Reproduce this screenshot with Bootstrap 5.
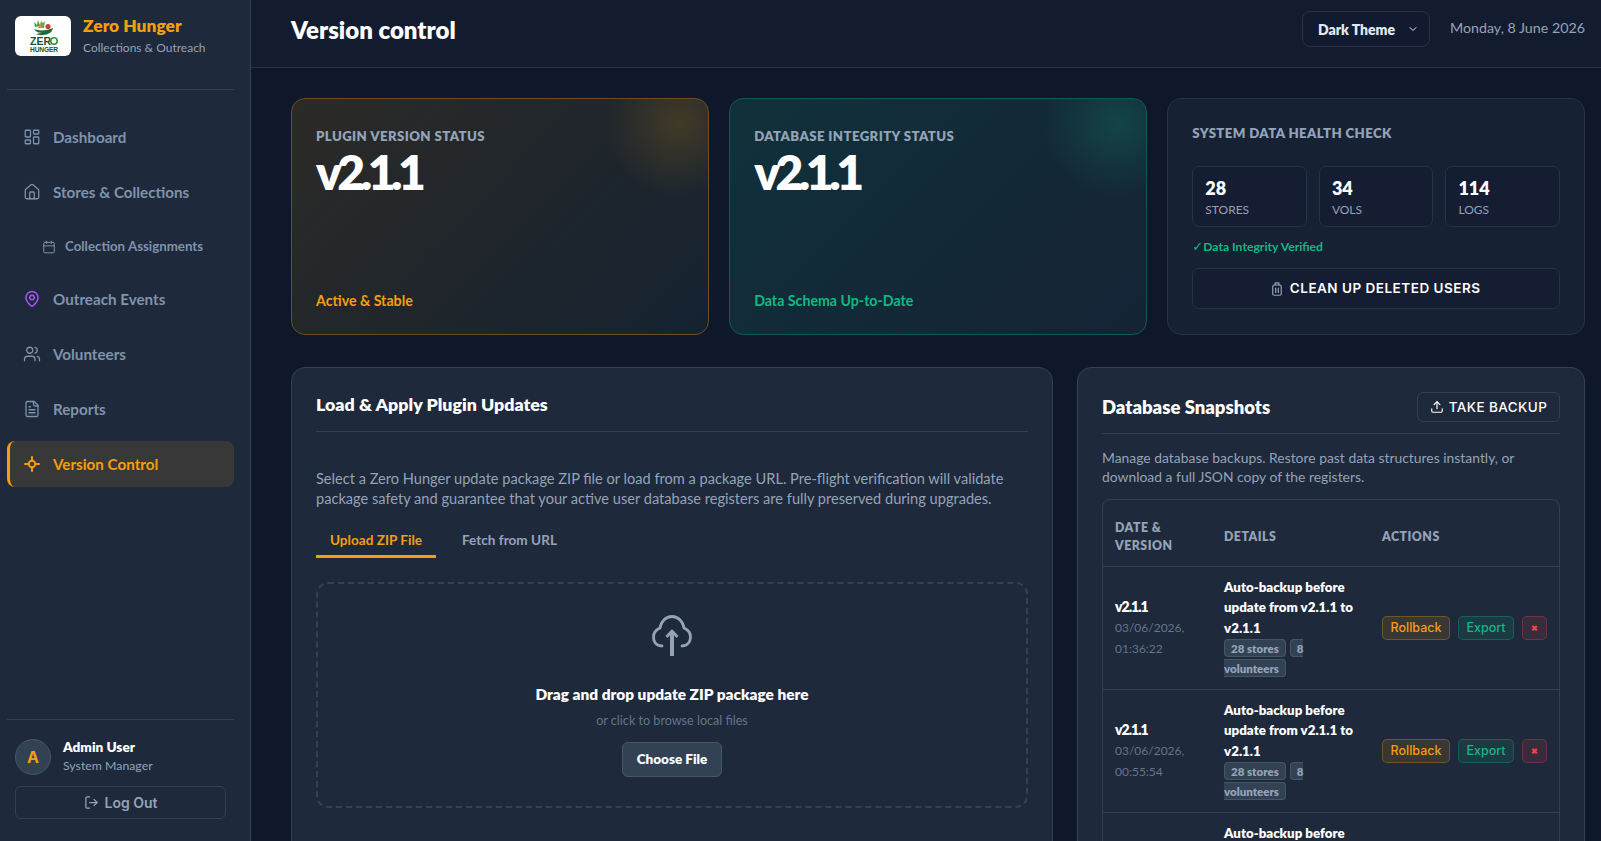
<!DOCTYPE html>
<html lang="en">
<head>
    <meta charset="UTF-8">
    <meta name="viewport" content="width=device-width, initial-scale=1.0">
    <title>Version control</title>
    <link href="https://cdn.jsdelivr.net/npm/bootstrap@5.3.0/dist/css/bootstrap.min.css" rel="stylesheet">
    <style>
        html, body { height: 100%; }
        body { background: #0f172a; color: #fff; font-family: Lato, "Noto Sans", sans-serif; overflow: hidden; }
        svg.ico { fill: none; stroke: currentColor; stroke-width: 2; stroke-linecap: round; stroke-linejoin: round; flex-shrink: 0; }
        svg.ico-thin { stroke-width: 1.7; }
        svg.ico-fine { stroke-width: 1.2; color: #94a3b8; }
        svg.ico-cloud { stroke-width: 2.8; }
        svg.ico-pin { color: #a855f7; }
        .app-shell { height: 841px; }

        /* sidebar */
        .side-panel { width: 251px; background: #1e293b; border-right: 1px solid #334155; flex-shrink: 0; padding: 16px 16px 22px 7px; }
        .brand-row { height: 74px; padding-left: 8px; border-bottom: 1px solid #334155; gap: 12px; align-items: flex-start; }
        .logo-box { width: 56px; height: 40px; background: #fff; border-radius: 6px; }
        .brand-name { color: #f59e0b; font-size: 17.4px; font-weight: 800; line-height: 20px; }
        .brand-sub { color: #94a3b8; font-size: 12px; line-height: 18px; margin-top: 3px; }
        .side-nav { margin-top: 24px; }
        .side-link { height: 46px; margin-bottom: 9px; padding-left: 17px; gap: 12px; color: #7f93ad; font-size: 15.2px; font-weight: 700; border-left: 3px solid transparent; border-radius: 8px; text-decoration: none; }
        .side-link svg { margin-left: -4px; }
        .side-sub { height: 46px; margin-bottom: 6px; padding-left: 35px; gap: 9px; color: #7f93ad; font-size: 13.3px; font-weight: 700; text-decoration: none; }
        .side-link.is-active { background: #383838; color: #f59e0b; border-left-color: #f59e0b; }
        .side-foot { border-top: 1px solid #334155; padding: 18px 0 0 8px; }
        .user-avatar { width: 36px; height: 36px; border-radius: 50%; background: #334155; border: 1px solid #475569; color: #f59e0b; font-family: Inter, sans-serif; font-size: 16px; font-weight: 700; }
        .user-meta { margin-left: 4px; }
        .user-name { font-size: 13.6px; font-weight: 800; line-height: 18px; }
        .user-role { color: #94a3b8; font-size: 12.3px; line-height: 19px; }
        .logout-btn { width: 211px; height: 33px; margin-top: 11px; background: transparent; border: 1px solid #334155; border-radius: 6px; color: #94a3b8; font-family: Inter, sans-serif; font-size: 14px; font-weight: 600; gap: 6px; }

        /* header */
        .top-bar { height: 68px; background: #131c2f; border-bottom: 1px solid #263247; padding: 0 16px 9px 40px; flex-shrink: 0; }
        .page-title { font-size: 24px; font-weight: 800; margin: 3px 0 0; }
        .theme-pick { width: 128px; height: 36px; background: #111a2e; border: 1px solid #263247; border-radius: 8px; font-size: 14px; font-weight: 800; color: #e2e8f0; gap: 12px; padding-left: 15px; }
        .today-label { color: #94a3b8; font-size: 14.25px; margin: 0 0 3px 20px; }

        /* main */
        .work-area { padding: 30px 16px 0 40px; }
        .stat-grid { display: grid; grid-template-columns: repeat(3, 1fr); gap: 20.5px; height: 237px; }
        .status-tile { position: relative; overflow: hidden; border-radius: 14px; padding: 29px 24px 24px; border: 1px solid #334155; }
        .tile-amber { border-color: #6b4f1c; background: radial-gradient(circle 75px at 388px 25px, rgba(245,158,11,.17), transparent), linear-gradient(135deg, #2c2a27 0%, #142230 100%); }
        .tile-green { border-color: #0d5c4f; background: radial-gradient(circle 75px at 388px 25px, rgba(16,185,129,.2), transparent), linear-gradient(135deg, #10313a 0%, #152235 100%); }
        .tile-plain { background: #162133; border-color: #263247; padding: 26px 24px; }
        .tile-label { color: #94a3b8; font-size: 13.2px; font-weight: 800; letter-spacing: .4px; line-height: 16px; text-transform: uppercase; }
        .tile-version { font-size: 48px; font-weight: 800; line-height: 50px; margin-top: 3px; letter-spacing: -4.5px; }
        .tile-foot { position: absolute; left: 24px; bottom: 23px; font-size: 14.2px; font-weight: 700; }
        .tone-amber { color: #f59e0b; }
        .tone-green { color: #10b981; }
        .count-row { display: grid; grid-template-columns: repeat(3, 1fr); gap: 12px; margin-top: 25px; }
        .count-box { height: 61px; background: #141d31; border: 1px solid #263247; border-radius: 7px; padding: 10px 12px; }
        .count-num { font-size: 18px; font-weight: 800; line-height: 22px; }
        .count-txt { color: #94a3b8; font-size: 12px; line-height: 22px; }
        .verified-line { color: #10b981; font-size: 12.2px; font-weight: 700; margin: 11px 0 13px; line-height: 17px; }
        .check-glyph { font-family: "DejaVu Sans", sans-serif; font-size: 13px; margin-right: -3px; }
        .wide-btn { width: 100%; height: 41px; background: #141d31; border: 1px solid #263247; border-radius: 7px; font-family: Inter, sans-serif; font-size: 13.5px; font-weight: 600; letter-spacing: .5px; color: #fff; gap: 8px; }

        .lower-grid { display: grid; grid-template-columns: 762px 1fr; gap: 24px; margin-top: 32px; }
        .panel-box { background: #1e293b; border: 1px solid #334155; border-radius: 14px; padding: 24px; height: 520px; overflow: hidden; }
        .panel-head { border-bottom: 1px solid #334155; height: 40px; }
        .panel-head.snap-bar { height: 42px; }
        .panel-title { font-size: 17.8px; font-weight: 800; margin: 0; line-height: 24px; }
        .panel-title.snap-head { font-size: 18.5px; margin-top: 3px; }
        .panel-text { color: #94a3b8; font-size: 14.6px; line-height: 20px; margin: 0; padding-top: 37px; }
        .pick-tabs { margin-top: 14px; }
        .pick-tab { height: 35px; width: 120px; padding: 2px 0 0; font-size: 13.6px; font-weight: 700; color: #94a3b8; background: none; border: 0; border-bottom: 3px solid transparent; white-space: nowrap; }
        .pick-tab + .pick-tab { margin-left: 26px; width: auto; }
        .pick-tab.is-on { color: #f59e0b; border-bottom-color: #f59e0b; }
        .drop-zone { height: 226px; margin-top: 24px; border: 2px dashed #334155; border-radius: 12px; color: #94a3b8; padding-top: 31px; }
        .drop-title { color: #fff; font-size: 15.4px; font-weight: 800; margin-top: 26px; line-height: 22px; }
        .drop-sub { color: #64748b; font-size: 12.6px; margin-top: 7px; line-height: 18px; }
        .choose-btn { width: 100px; height: 35px; margin-top: 12px; background: #334155; border: 1px solid #475569; border-radius: 6px; color: #fff; font-size: 13.5px; font-weight: 800; padding: 0; }

        .backup-btn { height: 30px; width: 143px; background: transparent; border: 1px solid #334155; border-radius: 6px; color: #fff; font-family: Inter, sans-serif; font-size: 13.5px; font-weight: 500; letter-spacing: .4px; gap: 5px; padding: 0; }
        .snap-note { color: #94a3b8; font-size: 13.9px; line-height: 19px; margin: 14px 0 13px; }
        .snap-wrap { border: 1px solid #334155; border-radius: 8px; }
        .snap-table { --bs-table-bg: transparent; --bs-table-color: #fff; --bs-table-border-color: #334155; margin: 0; table-layout: fixed; }
        .snap-table th { color: #94a3b8; font-size: 12.3px; font-weight: 800; letter-spacing: .5px; line-height: 18px; padding: 16px 12px 8px; height: 66px; vertical-align: middle; text-transform: uppercase; }
        .snap-table td { padding: 10px 12px; vertical-align: middle; height: 123px; }
        .snap-table tr:last-child td { border-bottom: 0; }
        .snap-ver { font-size: 14px; font-weight: 800; line-height: 21px; letter-spacing: -1px; }
        .snap-when { color: #64748b; font-size: 12px; line-height: 20.5px; padding-top: 1px; }
        .snap-desc { font-size: 13.3px; font-weight: 800; line-height: 20.5px; }
        .snap-chips { font-size: 11.5px; line-height: 20px; }
        .snap-chip { background: #334155; border: 1px solid #475569; color: #94a3b8; font-weight: 800; border-radius: 4px; padding: 1.5px 6px; margin-right: 4px; }
        .act-btn { height: 24px; padding: 0 7.5px; border-radius: 5px; font-family: Inter, sans-serif; font-size: 12.5px; font-weight: 500; line-height: 22px; }
        .act-amber { background: rgba(245,158,11,.12); border: 1px solid rgba(245,158,11,.3); color: #f59e0b; }
        .act-green { background: rgba(16,185,129,.12); border: 1px solid rgba(16,185,129,.3); color: #10b981; }
        .act-red { background: rgba(239,68,68,.12); border: 1px solid rgba(239,68,68,.3); color: #ef4444; width: 25px; padding: 0; font-size: 8px; font-weight: 700; }
    </style>
</head>
<body>
    <div class="app-shell d-flex">
        <aside class="side-panel d-flex flex-column">
            <div class="brand-row d-flex">
                <div class="logo-box">
                    <svg width="56" height="40" viewBox="0 0 56 40">
                        <path d="M20 11l-1-5 3 3 1-5 2 6z" fill="#4d9a3d"/>
                        <path d="M24 12l2-7 2 2 2-2-1 7z" fill="#6aa84f"/>
                        <path d="M23 12l2-5 2 5z" fill="#e08a2e"/>
                        <circle cx="33" cy="10.5" r="2.6" fill="#c8422e"/>
                        <path d="M19 13c4 2 13 2 19-1-1 4-3 5-5 6-4 1.500-10 1.500-12 0 2-.5 5-1 7-1-4 0-7-1-9-4z" fill="#1f6b3a"/>
                        <text x="15" y="29" font-family="Liberation Sans, sans-serif" font-size="10.5" font-weight="700" fill="#14532d">ZER</text>
                        <circle cx="39" cy="25" r="3.2" fill="none" stroke="#3f9142" stroke-width="1.6"/>
                        <text x="15" y="36" font-family="Liberation Sans, sans-serif" font-size="6.6" font-weight="700" fill="#14532d" textLength="28">HUNGER</text>
                    </svg>
                </div>
                <div>
                    <div class="brand-name">Zero Hunger</div>
                    <div class="brand-sub">Collections &amp; Outreach</div>
                </div>
            </div>

            <nav class="side-nav flex-grow-1">
                <a class="side-link d-flex align-items-center" href="#">
                    <svg class="ico ico-thin" width="18" height="18" viewBox="0 0 24 24"><rect x="3" y="3" width="7" height="9" rx="1"/><rect x="14" y="3" width="7" height="5" rx="1"/><rect x="14" y="12" width="7" height="9" rx="1"/><rect x="3" y="16" width="7" height="5" rx="1"/></svg>
                    Dashboard
                </a>
                <a class="side-link d-flex align-items-center" href="#">
                    <svg class="ico ico-thin" width="18" height="18" viewBox="0 0 24 24"><path d="M15 21v-8a1 1 0 0 0-1-1h-4a1 1 0 0 0-1 1v8"/><path d="M3 10a2 2 0 0 1 .709-1.528l7-5.999a2 2 0 0 1 2.582 0l7 5.999A2 2 0 0 1 21 10v9a2 2 0 0 1-2 2H5a2 2 0 0 1-2-2z"/></svg>
                    Stores &amp; Collections
                </a>
                <a class="side-sub d-flex align-items-center" href="#">
                    <svg class="ico ico-thin" width="14" height="14" viewBox="0 0 24 24"><rect x="3" y="4" width="18" height="18" rx="2"/><path d="M16 2v4M8 2v4M3 10h18"/></svg>
                    Collection Assignments
                </a>
                <a class="side-link d-flex align-items-center" href="#">
                    <svg class="ico ico-pin" width="18" height="18" viewBox="0 0 24 24"><path d="M20 10c0 6-8 12-8 12s-8-6-8-12a8 8 0 0 1 16 0Z"/><circle cx="12" cy="10" r="3"/></svg>
                    Outreach Events
                </a>
                <a class="side-link d-flex align-items-center" href="#">
                    <svg class="ico ico-thin" width="18" height="18" viewBox="0 0 24 24"><path d="M16 21v-2a4 4 0 0 0-4-4H6a4 4 0 0 0-4 4v2"/><circle cx="9" cy="7" r="4"/><path d="M22 21v-2a4 4 0 0 0-3-3.87"/><path d="M16 3.13a4 4 0 0 1 0 7.75"/></svg>
                    Volunteers
                </a>
                <a class="side-link d-flex align-items-center" href="#">
                    <svg class="ico ico-thin" width="18" height="18" viewBox="0 0 24 24"><path d="M15 2H6a2 2 0 0 0-2 2v16a2 2 0 0 0 2 2h12a2 2 0 0 0 2-2V7Z"/><path d="M14 2v4a2 2 0 0 0 2 2h4"/><path d="M10 9H8M16 13H8M16 17H8"/></svg>
                    Reports
                </a>
                <a class="side-link is-active d-flex align-items-center" href="#">
                    <svg class="ico" width="18" height="18" viewBox="0 0 18 18"><circle cx="9" cy="9" r="3.2"/><path d="M2 9h3.8M12.200 9H16M9 2v3.800M9 12.200V16"/></svg>
                    Version Control
                </a>
            </nav>

            <div class="side-foot">
                <div class="d-flex align-items-center gap-2">
                    <div class="user-avatar d-flex align-items-center justify-content-center">A</div>
                    <div class="user-meta">
                        <div class="user-name">Admin User</div>
                        <div class="user-role">System Manager</div>
                    </div>
                </div>
                <button class="logout-btn btn d-flex align-items-center justify-content-center">
                    <svg class="ico" width="15" height="15" viewBox="0 0 24 24"><path d="M9 21H5a2 2 0 0 1-2-2V5a2 2 0 0 1 2-2h4"/><path d="M16 17l5-5-5-5"/><path d="M21 12H9"/></svg>
                    Log Out
                </button>
            </div>
        </aside>

        <div class="flex-grow-1 d-flex flex-column overflow-hidden">
            <header class="top-bar d-flex align-items-center justify-content-between">
                <h1 class="page-title">Version control</h1>
                <div class="d-flex align-items-center">
                    <div class="theme-pick d-flex align-items-center">
                        Dark Theme
                        <svg class="ico" width="12" height="12" viewBox="0 0 24 24"><path d="M6 9l6 6 6-6"/></svg>
                    </div>
                    <span class="today-label">Monday, 8 June 2026</span>
                </div>
            </header>

            <main class="work-area">
                <section class="stat-grid">
                    <div class="status-tile tile-amber">
                        <div class="tile-label">Plugin Version Status</div>
                        <div class="tile-version">v2.1.1</div>
                        <div class="tile-foot tone-amber">Active &amp; Stable</div>
                    </div>
                    <div class="status-tile tile-green">
                        <div class="tile-label">Database Integrity Status</div>
                        <div class="tile-version">v2.1.1</div>
                        <div class="tile-foot tone-green">Data Schema Up-to-Date</div>
                    </div>
                    <div class="status-tile tile-plain">
                        <div class="tile-label">System Data Health Check</div>
                        <div class="count-row">
                            <div class="count-box"><div class="count-num">28</div><div class="count-txt">STORES</div></div>
                            <div class="count-box"><div class="count-num">34</div><div class="count-txt">VOLS</div></div>
                            <div class="count-box"><div class="count-num">114</div><div class="count-txt">LOGS</div></div>
                        </div>
                        <div class="verified-line"><span class="check-glyph">✓</span> Data Integrity Verified</div>
                        <button class="wide-btn btn d-flex align-items-center justify-content-center">
                            <svg class="ico ico-fine" width="10" height="14" viewBox="0 0 10 14"><rect x=".75" y="3" width="8.500" height="10.250" rx="1.500"/><path d="M3 3V1.500a.7.7 0 0 1 .7-.7h2.600a.7.7 0 0 1 .7.7V3M3.700 6v4.500M6.300 6v4.500"/></svg>
                            CLEAN UP DELETED USERS
                        </button>
                    </div>
                </section>

                <section class="lower-grid">
                    <div class="panel-box">
                        <div class="panel-head"><h2 class="panel-title">Load &amp; Apply Plugin Updates</h2></div>
                        <p class="panel-text">Select a Zero Hunger update package ZIP file or load from a package URL. Pre-flight verification will validate package safety and guarantee that your active user database registers are fully preserved during upgrades.</p>
                        <div class="pick-tabs d-flex">
                            <button class="pick-tab is-on">Upload ZIP File</button>
                            <button class="pick-tab">Fetch from URL</button>
                        </div>
                        <div class="drop-zone d-flex flex-column align-items-center">
                            <svg class="ico ico-cloud" width="40" height="42" viewBox="0 0 40 42"><path d="M10 31C3.500 31 1.500 26 1.500 22c0-4.500 3-7.500 6.500-9C9 6.500 14 1.500 20 1.500S31 6.500 32 13c3.500 1.500 6.500 4.500 6.500 9 0 4-2.500 9-8.500 9"/><path d="M20 41V17" stroke-width="4" stroke-linecap="butt"/><path d="M14.500 22l5.500-6 5.500 6" stroke-linecap="butt"/></svg>
                            <div class="drop-title">Drag and drop update ZIP package here</div>
                            <div class="drop-sub">or click to browse local files</div>
                            <button class="choose-btn btn">Choose File</button>
                        </div>
                    </div>

                    <div class="panel-box">
                        <div class="panel-head snap-bar d-flex justify-content-between align-items-start">
                            <h2 class="panel-title snap-head">Database Snapshots</h2>
                            <button class="backup-btn btn d-flex align-items-center justify-content-center">
                                <svg class="ico" width="14" height="14" viewBox="0 0 24 24"><path d="M21 15v4a2 2 0 0 1-2 2H5a2 2 0 0 1-2-2v-4"/><path d="M17 8l-5-5-5 5"/><path d="M12 3v12"/></svg>
                                TAKE BACKUP
                            </button>
                        </div>
                        <p class="snap-note">Manage database backups. Restore past data structures instantly, or download a full JSON copy of the registers.</p>
                        <div class="snap-wrap">
                            <table class="table snap-table">
                                <thead>
                                    <tr>
                                        <th style="width:109px">Date &amp; Version</th>
                                        <th style="width:158px">Details</th>
                                        <th>Actions</th>
                                    </tr>
                                </thead>
                                <tbody id="snapRows"></tbody>
                            </table>
                        </div>
                    </div>
                </section>
            </main>
        </div>
    </div>

    <script src="https://cdn.jsdelivr.net/npm/bootstrap@5.3.0/dist/js/bootstrap.bundle.min.js"></script>
    <script>
        const snaps = [
            { date: '03/06/2026,', time: '01:36:22' },
            { date: '03/06/2026,', time: '00:55:54' },
            { date: '03/06/2026,', time: '00:12:08' }
        ];
        document.getElementById('snapRows').innerHTML = snaps.map(s => `
            <tr>
                <td><div class="snap-ver">v2.1.1</div><div class="snap-when">${s.date}<br>${s.time}</div></td>
                <td><div class="snap-desc">Auto-backup before update from v2.1.1 to v2.1.1</div><div class="snap-chips"><span class="snap-chip">28 stores</span><span class="snap-chip">8 volunteers</span></div></td>
                <td><div class="d-flex gap-2"><button class="act-btn act-amber">Rollback</button><button class="act-btn act-green">Export</button><button class="act-btn act-red">✖</button></div></td>
            </tr>`).join('');
    </script>
</body>
</html>
